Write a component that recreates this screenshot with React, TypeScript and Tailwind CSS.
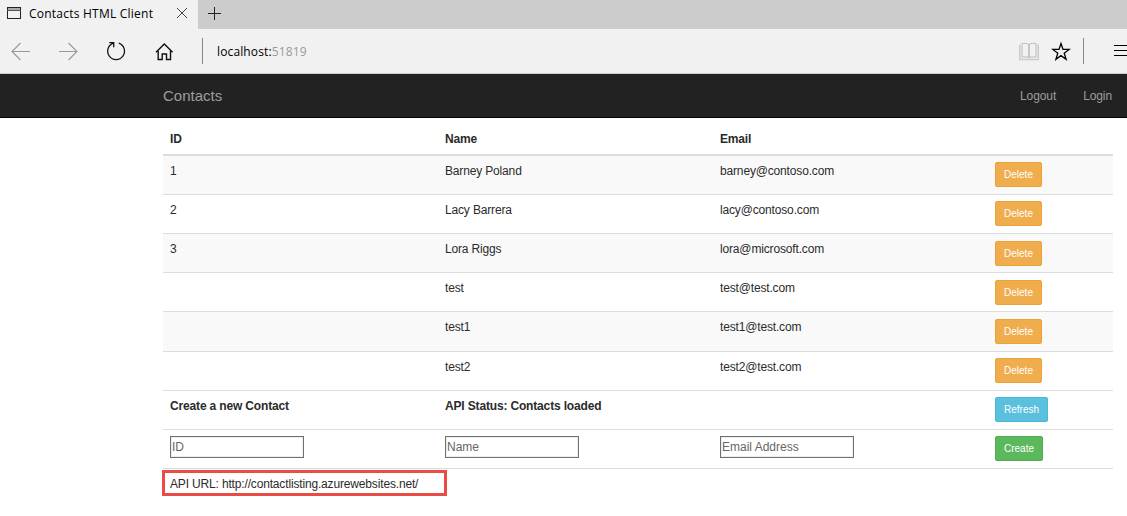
import React from "react";

const contacts = [
  { id: "1", name: "Barney Poland", email: "barney@contoso.com", row: "h-[39px] bg-[#f9f9f9]", pad: "pt-[6px]" },
  { id: "2", name: "Lacy Barrera", email: "lacy@contoso.com", row: "h-[39px]", pad: "pt-[6px]" },
  { id: "3", name: "Lora Riggs", email: "lora@microsoft.com", row: "h-[39px] bg-[#f9f9f9]", pad: "pt-[7px]" },
  { id: "", name: "test", email: "test@test.com", row: "h-[39px]", pad: "pt-[7px]" },
  { id: "", name: "test1", email: "test1@test.com", row: "h-[40px] bg-[#f9f9f9]", pad: "pt-[7px]" },
  { id: "", name: "test2", email: "test2@test.com", row: "h-[39px]", pad: "pt-[6px]" },
];

const rowBase = "grid grid-cols-[275px_275px_275px_125px] border-b border-[#ddd] pl-[7px]";
const buttonBase = "block h-[25px] rounded-[2px] border text-center font-['Liberation_Sans',Arial,sans-serif] text-[10px] leading-[23px] tracking-normal text-white";

function Field({ label }: { label: string }) {
  return (
    <input
      placeholder={label}
      className="mt-[6px] block h-[22px] w-[134px] border border-[#707070] bg-white px-[1px] text-[12px] tracking-normal shadow-[inset_0_0_0_1px_#eee] placeholder:text-[#666] placeholder:opacity-100"
    />
  );
}

function BrowserChrome() {
  return (
    <div className="h-[74px] border-b border-[#ccc] bg-[#f1f1f1] font-['Open_Sans','Noto_Sans',sans-serif] text-[12px] text-black">
      <div className="flex h-[29px] bg-[#ccc]">
        <div className="flex h-[29px] w-[198px] items-start bg-[#f1f1f1] pl-[7px]">
          <svg className="mt-[7px] h-[13px] w-[15px] shrink-0" viewBox="0 0 15 13" fill="none" shapeRendering="crispEdges">
            <rect x="0" y="1" width="14" height="3" fill="#aaa" />
            <rect x=".5" y=".5" width="13" height="10.5" stroke="#222" />
            <path d="M0 3.5h14" stroke="#555" />
          </svg>
          <span className="ml-[7px] w-[140px] whitespace-nowrap text-[12px] leading-[27px] tracking-[0.23px]">Contacts HTML Client</span>
          <svg className="mt-[8px] ml-[8px] h-[10px] w-[10px] shrink-0" viewBox="0 0 10 10" stroke="#444" fill="none">
            <path d="M0 0l10 10M10 0L0 10" />
          </svg>
        </div>
        <svg className="mt-[7px] ml-[10px] h-[14px] w-[14px]" viewBox="0 0 14 14" stroke="#222" fill="none">
          <path d="M6.5 0v13M0 6.5h13" />
        </svg>
      </div>
      <div className="flex h-[44px] items-start">
        <svg className="mt-[13px] ml-[11px] h-[19px] w-[20px]" viewBox="0 0 20 19" stroke="#999" fill="none" strokeWidth="1.1">
          <path d="M19 9.5H1M9.5 1L1 9.5 9.5 18" />
        </svg>
        <svg className="mt-[13px] ml-[28px] h-[19px] w-[20px]" viewBox="0 0 20 19" stroke="#999" fill="none" strokeWidth="1.1">
          <path d="M0 9.5h18M9.5 1L18 9.5 9.5 18" />
        </svg>
        <svg className="mt-[12px] ml-[27px] h-[20px] w-[20px]" viewBox="0 0 20 20" stroke="#111" fill="none" strokeWidth="1.3">
          <path d="M12.8 2.2a8.4 8.4 0 1 1-5.400 0M3.300 1.600h4.400v4.600" />
        </svg>
        <svg className="mt-[14px] ml-[29px] h-[18px] w-[19px]" viewBox="0 0 19 18" stroke="#111" fill="none" strokeWidth="1.4">
          <path d="M1 9.3L9.3 1l8.3 8.3M3.2 8v8.5h4V11h4.3v5.5h4V8" />
        </svg>
        <div className="mt-[9px] ml-[28px] h-[26px] w-px bg-[#888]" />
        <span className="ml-[14px] whitespace-nowrap text-[12px] leading-[45px] tracking-[0.13px]">
          localhost:<span className="text-[#999]">51819</span>
        </span>
        <svg className="mt-[13px] ml-auto h-[19px] w-[20px]" viewBox="0 0 20 19" fill="none">
          <path d="M.8 2.5v15h18.400v-15" stroke="#ccc" strokeWidth="1.6" />
          <path d="M10 2.500C8.500 1.200 5 1.200 3 1.500v13.500h5.500L10 16l1.500-1H17V1.500c-2-.3-5.500-.3-7 1z" stroke="#bbb" />
          <path d="M10 2.500v13" stroke="#aaa" strokeWidth="1.200" />
        </svg>
        <svg className="mt-[12px] ml-[12px] h-[20px] w-[20px]" viewBox="0 0 20 20" stroke="#000" fill="none" strokeWidth="1.300">
          <path d="M10 2.500l2 5.900h6.200l-5 3.800 1.900 6.100L10 14.600l-5.100 3.700 1.900-6.100-5-3.800H8z" />
        </svg>
        <div className="mt-[9px] ml-[12px] h-[26px] w-px bg-[#888]" />
        <svg className="mt-[16px] ml-[30px] h-[13px] w-[13px]" viewBox="0 0 13 13" stroke="#000" shapeRendering="crispEdges">
          <path d="M0 .5h13M0 5.500h13M0 10.500h13" />
        </svg>
      </div>
    </div>
  );
}

export default function App() {
  return (
    <div className="h-[516px] w-[1127px] overflow-hidden bg-white font-['Liberation_Sans',Arial,sans-serif] text-[12px] text-[#2b2b2b]">
      <BrowserChrome />
      <nav className="flex h-[44px] items-start border-b border-black bg-[#222] pr-[15px] pl-[163px] leading-[43px] text-[#9d9d9d]">
        <span className="text-[15px]">Contacts</span>
        <span className="ml-auto pt-px tracking-[-0.1px]">Logout</span>
        <span className="ml-[27px] pt-px tracking-[-0.1px]">Login</span>
      </nav>
      <main className="ml-[163px] w-[950px] leading-[17px] tracking-[-0.16px]">
        <div className="grid h-[38px] grid-cols-[275px_275px_275px_125px] border-b-2 border-[#ddd] pt-[13px] pl-[7px] font-bold">
          <span>ID</span>
          <span>Name</span>
          <span>Email</span>
        </div>
        {contacts.map((c) => (
          <div key={c.name} className={`${rowBase} ${c.row}`}>
            <span className="pt-[7px]">{c.id}</span>
            <span className="pt-[7px]">{c.name}</span>
            <span className="pt-[7px]">{c.email}</span>
            <div className={c.pad}>
              <button className={`${buttonBase} w-[47px] border-[#eea236] bg-[#f0ad4e]`}>Delete</button>
            </div>
          </div>
        ))}
        <div className={`${rowBase} h-[39px]`}>
          <b className="pt-[7px]">Create a new Contact</b>
          <b className="pt-[7px]">API Status: Contacts loaded</b>
          <span />
          <div className="pt-[6px]">
            <button className={`${buttonBase} w-[53px] border-[#46b8da] bg-[#5bc0de]`}>Refresh</button>
          </div>
        </div>
        <div className={`${rowBase} h-[39px]`}>
          <Field label="ID" />
          <Field label="Name" />
          <Field label="Email Address" />
          <div className="pt-[6px]">
            <button className={`${buttonBase} w-[48px] border-[#4cae4c] bg-[#5cb85c]`}>Create</button>
          </div>
        </div>
        <div className="mt-px -ml-px h-[26px] w-[285px] border-3 border-[#e84c44] pt-px pl-[5px] leading-[21px]">
          API URL: http://contactlisting.azurewebsites.net/
        </div>
      </main>
    </div>
  );
}
